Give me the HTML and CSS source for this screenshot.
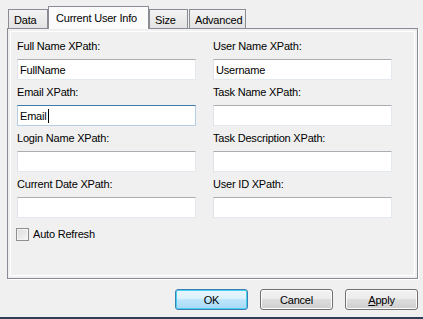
FILE: index.html
```html
<!DOCTYPE html>
<html lang="en">
<head>
  <meta charset="UTF-8">
  <title>Current User Info</title>
  <link rel="stylesheet" href="styles.css">
</head>
<body>
  <div class="dialog">
    <div class="tabs">
      <div class="tab tab-data">Data</div>
      <div class="tab tab-active">Current User Info</div>
      <div class="tab tab-size">Size</div>
      <div class="tab tab-advanced">Advanced</div>
    </div>

    <div class="panel">
      <div class="fields">
        <div class="field">
          <label class="field-label">Full Name XPath:</label>
          <div class="textbox">FullName</div>
        </div>
        <div class="field">
          <label class="field-label">User Name XPath:</label>
          <div class="textbox">Username</div>
        </div>
        <div class="field">
          <label class="field-label">Email XPath:</label>
          <div class="textbox focused">Email<span class="caret"></span></div>
        </div>
        <div class="field">
          <label class="field-label">Task Name XPath:</label>
          <div class="textbox"></div>
        </div>
        <div class="field">
          <label class="field-label">Login Name XPath:</label>
          <div class="textbox"></div>
        </div>
        <div class="field">
          <label class="field-label">Task Description XPath:</label>
          <div class="textbox"></div>
        </div>
        <div class="field">
          <label class="field-label">Current Date XPath:</label>
          <div class="textbox"></div>
        </div>
        <div class="field">
          <label class="field-label">User ID XPath:</label>
          <div class="textbox"></div>
        </div>
      </div>

      <label class="check">
        <span class="check-box"></span>
        Auto Refresh
      </label>
    </div>

    <div class="buttons">
      <button class="btn btn-default">OK</button>
      <button class="btn">Cancel</button>
      <button class="btn"><u>A</u>pply</button>
    </div>
  </div>
</body>
</html>
```

FILE: styles.css
```css
body {
  margin: 0;
  background-color: #f0f0f0;
  font-family: 'Liberation Sans', Arial, sans-serif;
  font-size: 11px;
  letter-spacing: -0.2px; /* closer to the narrow dialog font */
  color: #000000;
}

.dialog {
  width: 423px;
  height: 319px;
  display: flex;
  flex-direction: column;
  box-sizing: border-box;
  border-bottom: 2px solid #2d3e58; /* taskbar edge under the dialog */
}

/* Tab strip */
.tabs {
  display: flex;
  align-items: flex-end;
  height: 28px;
  padding-left: 8px;
}

.tab {
  box-sizing: border-box;
  height: 19px;
  border: 1px solid #898c95;
  border-bottom: none;
  background: linear-gradient(#f3f3f3, #e3e3e3);
  padding: 4px 0 0 5px;
  line-height: 13px;
  white-space: nowrap;
  overflow: hidden;
}

.tab-data {
  width: 40px;
}

.tab-active {
  width: 101px;
  height: 23px;
  margin-bottom: -1px;
  position: relative;
  z-index: 1;
  background: #fbfbfb;
  padding: 5px 0 0 7px;
}

.tab-size {
  width: 39px;
}

.tab-advanced {
  width: 57px;
  margin-left: 1px;
}

/* Tab page */
.panel {
  height: 251px;
  margin: 0 5px 0 7px;
  box-sizing: border-box;
  border: 1px solid #898c95;
  box-shadow: inset 0 0 0 2px #f0f0f0, inset 0 0 0 3px #ffffff, 1px 1px 0 #ffffff;
  padding: 10px 24px 0 9px;
}

.fields {
  display: grid;
  grid-template-columns: 179px 179px;
  column-gap: 17px;
  row-gap: 5px;
}

.field {
  display: flex;
  flex-direction: column;
}

.field-label {
  height: 14px;
  line-height: 14px;
  margin-bottom: 6px;
}

.textbox {
  height: 21px;
  box-sizing: border-box;
  background: #ffffff;
  border: 1px solid #e3e9ef;
  border-top-color: #abadb3;
  border-left-color: #e2e3ea;
  padding: 3px 0 0 2px;
  line-height: 14px;
}

.textbox.focused {
  border-color: #b5cfe7;
  border-top-color: #3d7bad;
}

.caret {
  display: inline-block;
  width: 1px;
  height: 14px;
  margin-left: 1px;
  background: #000000;
  vertical-align: top;
}

/* Checkbox */
.check {
  display: flex;
  align-items: center;
  gap: 4px;
  margin-top: 10px;
  margin-left: -1px;
  line-height: 13px;
}

.check-box {
  width: 11px;
  height: 11px;
  border: 1px solid #8f8f8f;
  background: linear-gradient(135deg, #dcdcdc, #f6f6f6);
  box-shadow: inset 0 0 0 1px #f4f4f4;
}

/* Dialog buttons */
.buttons {
  display: flex;
  justify-content: flex-end;
  gap: 12px;
  padding: 10px 5px 0 0;
}

.btn {
  width: 73px;
  height: 21px;
  box-sizing: border-box;
  border: 1px solid #707070;
  border-radius: 3px;
  background: linear-gradient(#f2f2f2 0%, #ebebeb 50%, #dddddd 50%, #cfcfcf 100%);
  box-shadow: inset 0 0 0 1px #fcfcfc;
  font-family: 'Liberation Sans', Arial, sans-serif;
  font-size: 11px;
  letter-spacing: -0.2px;
  color: #000000;
  padding: 0;
}

.btn-default {
  border-color: #3c7fb1;
  background: linear-gradient(#eaf6fd 0%, #d9f0fc 50%, #bee6fd 50%, #a7d9f5 100%);
  box-shadow: inset 0 0 0 1px #48d0f4;
}
```
